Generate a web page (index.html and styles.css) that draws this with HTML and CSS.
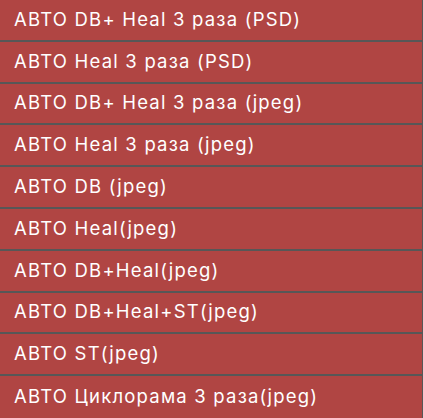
FILE: index.html
```html
<!DOCTYPE html>
<html>
<head>
<meta charset="utf-8">
<link rel="stylesheet" href="styles.css">
</head>
<body>
<ul class="list">
  <li class="item">АВТО DB+ Heal 3 раза (PSD)</li>
  <li class="item">АВТО Heal 3 раза (PSD)</li>
  <li class="item">АВТО DB+ Heal 3 раза (jpeg)</li>
  <li class="item">АВТО Heal 3 раза (jpeg)</li>
  <li class="item">АВТО DB (jpeg)</li>
  <li class="item">АВТО Heal(jpeg)</li>
  <li class="item">АВТО DB+Heal(jpeg)</li>
  <li class="item">АВТО DB+Heal+ST(jpeg)</li>
  <li class="item">АВТО ST(jpeg)</li>
  <li class="item">АВТО Циклорама 3 раза(jpeg)</li>
</ul>
</body>
</html>
```
FILE: styles.css
```css
html, body {
  margin: 0;
  padding: 0;
  background: #b04543;
}
.list {
  list-style: none;
  margin: 0;
  padding: 0;
  width: 422px;
  border-right: 1px solid #575757;
  height: 418px;
  overflow: hidden;
}
.item {
  box-sizing: border-box;
  height: 41.8px;
  padding-left: 14px;
  display: flex;
  align-items: center;
  padding-bottom: 2px;
  background: #b04543;
  border-bottom: 2px solid #575757;
  color: #fff;
  font-family: Inter, "Liberation Sans", sans-serif;
  font-weight: 400;
  font-size: 18.5px;
  letter-spacing: 1.2px;
  white-space: nowrap;
}
.item:last-child {
  border-bottom: none;
}
```
